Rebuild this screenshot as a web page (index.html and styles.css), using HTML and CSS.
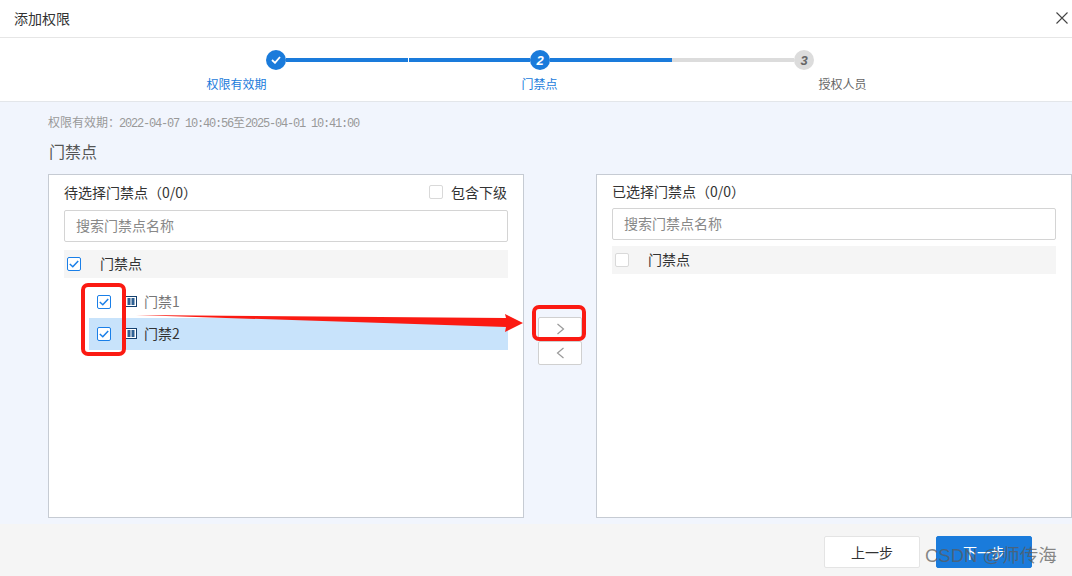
FILE: index.html
```html
<!DOCTYPE html>
<html lang="zh">
<head>
<meta charset="utf-8">
<title>添加权限</title>
<link rel="stylesheet" href="styles.css">
</head>
<body>
<div class="dialog">
  <header class="head">
    <span class="head-title">添加权限</span>
    <svg class="close" width="12" height="12" viewBox="0 0 12 12"><path d="M.5.5l11 11M11.500.5l-11 11" stroke="#444" stroke-width="1.100" fill="none"/></svg>
  </header>
  <section class="steps">
    <div class="track">
      <span class="dot dot-on">
        <svg width="10" height="8" viewBox="0 0 10 8"><path d="M1 4l3 2.800L9 1" stroke="#fff" stroke-width="1.800" fill="none"/></svg>
      </span>
      <span class="line line-a"></span>
      <span class="line line-b"></span>
      <span class="dot dot-on dot-num">2</span>
      <span class="line line-c"></span>
      <span class="line line-d"></span>
      <span class="dot dot-off dot-num">3</span>
    </div>
    <div class="labels">
      <span class="label label-on">权限有效期</span>
      <span class="label label-on">门禁点</span>
      <span class="label">授权人员</span>
    </div>
  </section>
  <main class="content">
    <p class="validity">权限有效期：<span class="mono mono-first">2022-04-07 10:40:56</span>至<span class="mono">2025-04-01 10:41:00</span></p>
    <h2 class="section">门禁点</h2>
    <div class="transfer">
      <div class="panel">
        <div class="panel-head">
          <span>待选择门禁点（0/0）</span>
          <label class="sub"><span class="check"></span>包含下级</label>
        </div>
        <div class="search">搜索门禁点名称</div>
        <div class="tree-root"><span class="check check-on"><svg width="10" height="8" viewBox="0 0 10 8"><path d="M.8 4l3 2.800L9.200 1" stroke="#1a7fe8" stroke-width="1.500" fill="none"/></svg></span><span class="lift">门禁点</span></div>
        <div class="tree-row">
          <span class="check check-on"><svg width="10" height="8" viewBox="0 0 10 8"><path d="M.8 4l3 2.800L9.200 1" stroke="#1a7fe8" stroke-width="1.500" fill="none"/></svg></span>
          <svg class="door" width="12" height="11" viewBox="0 0 12 11"><rect x=".5" y=".5" width="11" height="10" fill="#fff" stroke="#14406f"/><rect x="2.500" y="2" width="3" height="7" fill="#2f6193"/><rect x="6.500" y="2" width="3" height="7" fill="#2f6193"/></svg>
          <span class="lift">门禁1</span>
        </div>
        <div class="tree-row tree-row-sel">
          <span class="check check-on"><svg width="10" height="8" viewBox="0 0 10 8"><path d="M.8 4l3 2.800L9.200 1" stroke="#1a7fe8" stroke-width="1.500" fill="none"/></svg></span>
          <svg class="door" width="12" height="11" viewBox="0 0 12 11"><rect x=".5" y=".5" width="11" height="10" fill="#fff" stroke="#14406f"/><rect x="2.500" y="2" width="3" height="7" fill="#2f6193"/><rect x="6.500" y="2" width="3" height="7" fill="#2f6193"/></svg>
          <span class="lift">门禁2</span>
        </div>
      </div>
      <div class="mid">
        <button class="move"><svg width="9" height="12" viewBox="0 0 9 12"><path d="M1.500 1l6 5-6 5" stroke="#999" stroke-width="1.200" fill="none"/></svg></button>
        <button class="move"><svg width="9" height="12" viewBox="0 0 9 12"><path d="M7.500 1l-6 5 6 5" stroke="#999" stroke-width="1.200" fill="none"/></svg></button>
      </div>
      <div class="panel panel-right">
        <div class="panel-head panel-head-right"><span>已选择门禁点（0/0）</span></div>
        <div class="search search-right">搜索门禁点名称</div>
        <div class="tree-root tree-root-right"><span class="check"></span><span class="lift">门禁点</span></div>
      </div>
    </div>
  </main>
  <footer class="foot">
    <button class="btn">上一步</button>
    <button class="btn btn-primary">下一步</button>
  </footer>
  <svg class="marks" width="1072" height="576" viewBox="0 0 1072 576">
    <rect x="83" y="285" width="41" height="69" rx="5" fill="none" stroke="#fb1a12" stroke-width="4"/>
    <rect x="534" y="307" width="50" height="32" rx="5" fill="none" stroke="#fb1a12" stroke-width="4"/>
    <path d="M136 315L506 318L505 314L523 323L505 332L506 327Z" fill="#fb1a12"/>
  </svg>
  <span class="watermark">CSDN @师传海</span>
</div>
</body>
</html>
```
FILE: styles.css
```css
* { box-sizing: border-box; }
html, body { margin: 0; padding: 0; }
body {
  width: 1072px;
  height: 576px;
  overflow: hidden;
  background: #fff;
  font-family: "Noto Sans CJK SC", "Liberation Sans", sans-serif;
  font-size: 14px;
  color: #333;
}
.dialog { position: relative; width: 1072px; height: 576px; display: flex; flex-direction: column; }
.head {
  height: 38px;
  flex: none;
  display: flex;
  align-items: center;
  justify-content: space-between;
  padding: 0 4px 1px 14px;
  border-bottom: 1px solid #e6e6e6;
}
.head-title { font-size: 14px; color: #333; }
.close { display: block; }

.steps { height: 64px; flex: none; border-bottom: 1px solid #e3e6ea; padding-top: 12px; }
.track { display: flex; align-items: center; height: 20px; padding-left: 266px; }
.dot {
  width: 20px; height: 20px; border-radius: 50%;
  display: flex; align-items: center; justify-content: center; flex: none;
}
.dot-on { background: #1a7bdb; color: #fff; }
.dot-off { background: #dcdcdc; color: #666; }
.dot-num { font: italic bold 13px "Liberation Sans", sans-serif; }
.line { height: 4px; flex: none; }
.line-a { width: 122px; background: #1a7bdb; margin-right: 1px; }
.line-b { width: 121px; background: #1a7bdb; }
.line-c { width: 122px; background: #1a7bdb; margin-right: 0; }
.line-d { width: 122px; background: #dcdcdc; }
.labels {
  display: grid;
  grid-template-columns: repeat(3, 303px);
  padding-left: 85px;
  margin-top: 4px;
  text-align: center;
  line-height: 20px;
  font-size: 12px;
}
.label { color: #666; }
.label-on { color: #1a7bdb; }

.content { flex: 1; min-height: 0; background: #f1f5fd; padding: 11px 0 6px 48px; display: flex; flex-direction: column; }
.validity { margin: 0; font-size: 12px; line-height: 17px; color: #999; }
.mono { font-family: "Liberation Mono", monospace; letter-spacing: -1.2px; }
.mono-first { margin-left: -1px; }
.section { margin: 6px 0 0 1px; font-size: 16px; line-height: 24px; font-weight: 400; color: #555; }
.transfer { display: flex; flex: 1; min-height: 0; margin-top: 11px; }
.panel { width: 476px; flex: none; background: #fff; border: 1px solid #c6cbd3; padding: 0 15px; }
.panel-head { height: 35px; padding-bottom: 2px; display: flex; align-items: center; justify-content: space-between; color: #333; line-height: 20px; }
.panel-head-right { height: 33px; }
.sub { display: flex; align-items: center; gap: 8px; padding-right: 1px; }
.check {
  width: 14px; height: 14px; flex: none;
  background: #fff; border: 1px solid #d9d9d9; border-radius: 2px;
  display: flex; align-items: center; justify-content: center;
}
.check-on { border-color: #1a7fe8; }
.search {
  height: 32px; border: 1px solid #d4d4d4; border-radius: 2px;
  padding-left: 11px; line-height: 28px; color: #888; background: #fff;
}
.lift { padding-bottom: 2px; }
.tree-root {
  height: 28px; margin-top: 8px; background: #f5f5f5;
  display: flex; align-items: center; gap: 19px; padding-left: 3px; color: #333;
}
.tree-root-right { margin-top: 6px; }
.tree-row {
  height: 32px; margin-left: 25px;
  display: flex; align-items: center; padding-left: 8px; color: #777;
}
.tree-root + .tree-row { margin-top: 8px; }
.tree-row-sel { background: #c8e3fb; color: #333; }
.door { margin: 0 7px 1px 14px; flex: none; }

.mid { width: 72px; flex: none; display: flex; flex-direction: column; align-items: center; gap: 0; padding-top: 143px; }
.move {
  width: 44px; height: 24px; padding: 0; background: #fff;
  border: 1px solid #d0d0d0; border-radius: 2px;
  display: flex; align-items: center; justify-content: center;
}
.panel-right { width: 476px; }

.foot {
  height: 52px; flex: none; background: #f5f5f5;
  display: flex; gap: 16px; justify-content: flex-end; align-items: flex-start;
  padding: 12px 40px 0 0;
}
.btn {
  width: 96px; height: 32px; padding: 0 0 1px; background: #fff;
  border: 1px solid #e4e4e4; border-radius: 2px;
  font: 14px "Noto Sans CJK SC", sans-serif; color: #333;
}
.btn-primary { background: #1a7bdb; border-color: #1a7bdb; color: #fff; }

.marks { position: absolute; left: 0; top: 0; pointer-events: none; }
.watermark {
  position: absolute; left: 925px; top: 542px;
  font-family: "Liberation Sans", "Noto Sans CJK SC", sans-serif;
  font-size: 18.5px; line-height: 28px; white-space: nowrap;
  color: rgba(90, 90, 90, .72);
}
```
